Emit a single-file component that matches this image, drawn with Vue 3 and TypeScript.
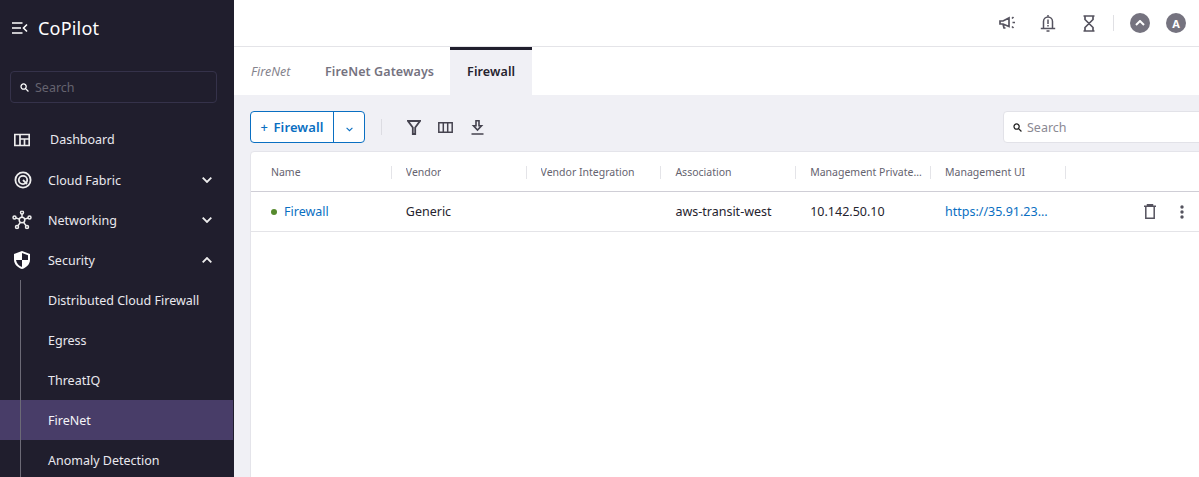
<template>
  <div class="shell">
    <aside class="sidebar">
      <div class="brand">
        <svg class="brand-icon" width="16" height="12" viewBox="0 0 16 12">
          <path d="M0 1h10.5M0 6h9M0 11h10.5" stroke="#fff" stroke-width="1.6" fill="none" />
          <path d="M15 2.5 11.5 6l3.5 3.5" stroke="#fff" stroke-width="1.6" fill="none" />
        </svg>
        <span>CoPilot</span>
      </div>
      <div class="side-search">
        <svg width="9" height="9" viewBox="0 0 10 10" fill="none" stroke="#fff" stroke-width="1.400">
          <circle cx="4" cy="4" r="2.9" />
          <path d="m6.2 6.2 3.2 3.2" />
        </svg>
        <span>Search</span>
      </div>
      <nav class="nav">
        <a class="nav-item dash">
          <svg class="nav-icon" width="16" height="13" viewBox="0 0 16 13" fill="none" stroke="#eee" stroke-width="1.7">
            <path d="M.8.8h14.4v11.4H.8zM6 .8v11.4M6 5.500h9.200M10.500 5.500v6.700" />
          </svg>
          <span>Dashboard</span>
        </a>
        <a class="nav-item">
          <svg class="nav-icon" width="18" height="18" viewBox="0 0 18 18" fill="none" stroke="#eee" stroke-width="1.800">
            <circle cx="9" cy="9" r="7.6" />
            <circle cx="9" cy="9" r="4.2" />
            <path d="m9 9 4 4" />
          </svg>
          <span>Cloud Fabric</span>
          <svg class="chev" width="10" height="6" viewBox="0 0 10 6" fill="none" stroke="#eee" stroke-width="1.8"><path d="m.7.7 4.3 4.3L9.300.7" /></svg>
        </a>
        <a class="nav-item">
          <svg class="nav-icon net" width="20" height="19" viewBox="0 0 20 19" fill="none" stroke="#eee" stroke-width="1.500">
            <circle cx="10" cy="9.500" r="2.800" />
            <circle cx="10" cy="2" r="1.500" />
            <circle cx="2.500" cy="7" r="1.500" />
            <circle cx="17.500" cy="7" r="1.500" />
            <circle cx="5" cy="16.500" r="1.500" />
            <circle cx="15" cy="16.500" r="1.500" />
            <path d="M10 3.500v3.200M4 7.500l3.400 1.100M16 7.500l-3.400 1.100M5.900 15.200l2.500-3.300M14.100 15.200l-2.500-3.300" />
          </svg>
          <span>Networking</span>
          <svg class="chev" width="10" height="6" viewBox="0 0 10 6" fill="none" stroke="#eee" stroke-width="1.8"><path d="m.7.7 4.3 4.3L9.300.7" /></svg>
        </a>
        <a class="nav-item">
          <svg class="nav-icon" width="16" height="18" viewBox="0 0 16 18">
            <path d="M8 0 0 3v5.500C0 13 3.400 16.700 8 18c4.600-1.300 8-5 8-9.500V3z" fill="#fff" />
            <path d="M8 2 14 4.200V9H8zM8 9v7C5 15 2.600 12.400 2 9z" fill="#201e2d" />
          </svg>
          <span>Security</span>
          <svg class="chev" width="10" height="6" viewBox="0 0 10 6" fill="none" stroke="#eee" stroke-width="1.8"><path d="m.7 5.300 4.300-4.300 4.300 4.300" /></svg>
        </a>
        <div class="subnav">
          <a v-for="item in subItems" :key="item" class="sub-item" :class="{ active: item === 'FireNet' }">{{ item }}</a>
        </div>
      </nav>
    </aside>

    <main class="main">
      <header class="topbar">
        <svg width="18" height="14" viewBox="0 0 18 14" fill="none" stroke="#55535f" stroke-width="1.700">
          <path d="M1 5h3l6-3v8.500L4 8H1zM4 8l1 4h1.500" />
          <path d="M13 2.500l1.500-1.500M13.500 6.500h2.500M13 10.500l1.500 1.500" />
        </svg>
        <svg class="bell" width="16" height="18" viewBox="0 0 16 18" fill="none" stroke="#55535f" stroke-width="1.500">
          <path d="M8 1v1.300M3.500 14V7.500a4.500 4.500 0 0 1 9 0V14M.8 14.500h14.400M6.500 17h3" />
          <path d="M8 5.500V10M8 11v1.500" stroke-width="1.500" />
        </svg>
        <svg class="glass" width="12" height="17" viewBox="0 0 12 17" fill="none" stroke="#55535f" stroke-width="1.700">
          <path d="M.5 1h11M.5 16h11M2 1v3.500l8 8V16M10 1v3.500l-8 8V16" />
        </svg>
        <i class="top-sep"></i>
        <span class="round-btn">
          <svg width="10" height="6" viewBox="0 0 10 6" fill="none" stroke="#fff" stroke-width="2"><path d="m1 5 4-4 4 4" /></svg>
        </span>
        <span class="round-btn avatar">A</span>
      </header>

      <div class="tabs">
        <span class="crumb">FireNet</span>
        <span class="tab">FireNet Gateways</span>
        <span class="tab current">Firewall</span>
      </div>

      <section class="content">
        <div class="toolbar">
          <div class="split-btn">
            <button class="add"><em>+</em> Firewall</button>
            <button class="caret">
              <svg width="7" height="5" viewBox="0 0 7 5" fill="none" stroke="#0a6fc2" stroke-width="1.100"><path d="m.6.8 2.900 2.900L6.400.8" /></svg>
            </button>
          </div>
          <i class="tool-sep"></i>
          <svg class="tool" width="14" height="15" viewBox="0 0 14 15" fill="none" stroke="#45434f" stroke-width="1.800">
            <path d="M1 1h12L8.200 7.500V14H5.800V7.500z" />
          </svg>
          <svg class="tool cols" width="15" height="11" viewBox="0 0 15 11" fill="none" stroke="#45434f" stroke-width="1.500">
            <path d="M.8.800h13.400v9.400H.8zM5.300.8v9.400M9.700.8v9.400" />
          </svg>
          <svg class="tool" width="13" height="15" viewBox="0 0 13 15" fill="none" stroke="#45434f" stroke-width="1.600">
            <path d="M5 .8h3v5h2.500L6.500 10 2.500 5.800H5zM.5 14h12" />
          </svg>
          <div class="search">
            <svg width="9" height="9" viewBox="0 0 10 10" fill="none" stroke="#222" stroke-width="1.400">
              <circle cx="4" cy="4" r="2.900" />
              <path d="m6.200 6.200 3.200 3.200" />
            </svg>
            <span>Search</span>
          </div>
        </div>

        <div class="card">
          <div class="row head">
            <div v-for="col in columns" :key="col" class="cell"><span class="clip">{{ col }}</span></div>
          </div>
          <div class="row body">
            <div class="cell"><i class="dot"></i><a class="link">Firewall</a></div>
            <div class="cell">Generic</div>
            <div class="cell"></div>
            <div class="cell">aws-transit-west</div>
            <div class="cell">10.142.50.10</div>
            <div class="cell"><a class="link clip url">https://35.91.23…</a></div>
            <div class="actions">
              <svg width="12" height="15" viewBox="0 0 12 15" fill="none" stroke="#55535f" stroke-width="1.500">
                <path d="M0 2.200h12M3.500 2V.7h5V2M1.800 2.500v11.700h8.400V2.500" />
              </svg>
              <svg class="kebab" width="4" height="14" viewBox="0 0 4 14" fill="#55535f">
                <circle cx="2" cy="2" r="1.700" />
                <circle cx="2" cy="7" r="1.700" />
                <circle cx="2" cy="12" r="1.700" />
              </svg>
            </div>
          </div>
        </div>
      </section>
    </main>
  </div>
</template>

<script setup lang="ts">
const subItems: string[] = [
  'Distributed Cloud Firewall',
  'Egress',
  'ThreatIQ',
  'FireNet',
  'Anomaly Detection',
]

const columns: string[] = [
  'Name',
  'Vendor',
  'Vendor Integration',
  'Association',
  'Management Private…',
  'Management UI',
]
</script>

<style>
html,
body {
  margin: 0;
  overflow: hidden;
}
</style>

<style scoped>
.shell {
  display: flex;
  height: 477px;
  overflow: hidden;
  font-family: "Noto Sans", "Open Sans", sans-serif;
  color: #25232e;
}

.sidebar {
  flex: 0 0 234px;
  background: #201e2d;
  color: #e9e8ee;
  overflow: hidden;
}

.brand {
  display: flex;
  align-items: center;
  height: 55px;
  padding-left: 12px;
  color: #fff;
  font-size: 18px;
  letter-spacing: 0.2px;
}

.brand-icon {
  margin-right: 10px;
}

.side-search {
  display: flex;
  align-items: center;
  gap: 6px;
  height: 30px;
  margin: 16px 17px 0 10px;
  padding-left: 9px;
  border: 1px solid #35324a;
  border-radius: 4px;
  color: #65636f;
  font-size: 12.500px;
}

.nav {
  margin-top: 16px;
}

.nav-item {
  position: relative;
  display: flex;
  align-items: center;
  height: 40px;
  padding-left: 48px;
  font-size: 12.500px;
}

.nav-item.dash {
  padding-left: 50px;
  height: 41px;
}

.nav-icon {
  position: absolute;
  left: 14px;
  top: 50%;
  transform: translateY(-50%);
}

.nav-icon.net {
  left: 12px;
}

.chev {
  margin-left: auto;
  margin-right: 22px;
}

.subnav {
  position: relative;
}

.subnav::before {
  content: "";
  position: absolute;
  left: 20px;
  top: 0;
  bottom: 0;
  width: 1px;
  background: #6c6a76;
  z-index: 1;
}

.sub-item {
  display: flex;
  align-items: center;
  height: 40px;
  padding-left: 48px;
  margin-right: 1px;
  font-size: 12.500px;
}

.sub-item.active {
  background: #483d68;
  color: #f5f4f8;
}

.main {
  flex: 1;
  min-width: 0;
  display: flex;
  flex-direction: column;
  overflow: hidden;
}

.topbar {
  flex: none;
  display: flex;
  align-items: center;
  justify-content: flex-end;
  height: 46px;
  border-bottom: 1px solid #e4e4e8;
  padding-right: 13px;
}

.bell {
  margin-left: 23px;
}

.glass {
  margin-left: 27px;
}

.top-sep {
  width: 1px;
  height: 16px;
  background: #e0e0e4;
  margin: 0 16px 0 18px;
}

.round-btn {
  display: flex;
  align-items: center;
  justify-content: center;
  width: 20px;
  height: 20px;
  border-radius: 50%;
  background: #75737f;
  color: #fff;
  font-size: 11px;
  font-weight: 700;
}

.avatar {
  margin-left: 16px;
}

.tabs {
  flex: none;
  display: flex;
  height: 48px;
  align-items: stretch;
  font-size: 12.500px;
}

.crumb {
  display: flex;
  align-items: center;
  width: 75px;
  box-sizing: border-box;
  padding-left: 17px;
  color: #85838d;
  font-style: italic;
}

.tab {
  display: flex;
  align-items: center;
  padding: 0 16px;
  color: #75737f;
  font-weight: 600;
  letter-spacing: 0.1px;
}

.tab.current {
  width: 82px;
  box-sizing: border-box;
  border-top: 3px solid #201e2d;
  padding: 0 0 3px;
  justify-content: center;
  background: #f0f0f5;
  color: #25232e;
}

.content {
  flex: 1;
  min-height: 0;
  width: 989px;
  box-sizing: border-box;
  background: #f0f0f5;
  padding: 16px 0 0 16px;
}

.toolbar {
  display: flex;
  align-items: center;
  height: 32px;
}

.split-btn {
  display: flex;
  width: 115px;
  height: 32px;
  box-sizing: border-box;
  border: 1px solid #0a6fc2;
  border-radius: 4px;
  background: #fff;
  overflow: hidden;
}

.split-btn button {
  border: 0;
  background: none;
  padding: 0;
  font-family: inherit;
}

.split-btn .add {
  width: 83px;
  border-right: 1px solid #0a6fc2;
  color: #0a6fc2;
  font-size: 13px;
  font-weight: 600;
  letter-spacing: 0.1px;
}

.add em {
  font-style: normal;
  font-weight: 500;
  margin-right: 2px;
}

.caret {
  flex: 1;
}

.tool-sep {
  width: 1px;
  height: 16px;
  background: #dcdce2;
  margin: 0 25px 0 16px;
}

.tool {
  margin-right: 17px;
}

.tool.cols {
  margin-right: 18px;
}

.search {
  display: flex;
  align-items: center;
  gap: 5px;
  width: 220px;
  height: 32px;
  box-sizing: border-box;
  margin-left: auto;
  padding-left: 9px;
  background: #fff;
  border: 1px solid #e2e2e8;
  border-radius: 4px;
  color: #8b8993;
  font-size: 12.500px;
}

.card {
  margin-top: 8px;
  height: 400px;
  background: #fff;
  border: 1px solid #e4e4ea;
  border-radius: 4px 0 0 0;
}

.row {
  display: grid;
  grid-template-columns: repeat(6, 134.8px) 1fr;
  align-items: center;
}

.head {
  height: 39px;
  border-bottom: 1px solid #cfced6;
  font-size: 10.500px;
  color: #65636f;
}

.head .cell {
  position: relative;
}

.head .cell::after {
  content: "";
  position: absolute;
  right: -6px;
  top: 50%;
  margin-top: -6px;
  width: 1px;
  height: 13px;
  background: #e4e4e8;
}

.body {
  height: 39px;
  border-bottom: 1px solid #e4e4e8;
  font-size: 12.500px;
}

.cell {
  display: flex;
  align-items: center;
  min-width: 0;
  padding-left: 20px;
  box-sizing: border-box;
}

.clip {
  overflow: hidden;
  white-space: nowrap;
}

.dot {
  flex: none;
  width: 6px;
  height: 6px;
  margin-right: 7px;
  border-radius: 50%;
  background: #568a2d;
}

.link {
  color: #0a6fc2;
}

.actions {
  display: flex;
  align-items: center;
  padding-left: 84px;
}

.kebab {
  margin-left: 24px;
}
</style>
